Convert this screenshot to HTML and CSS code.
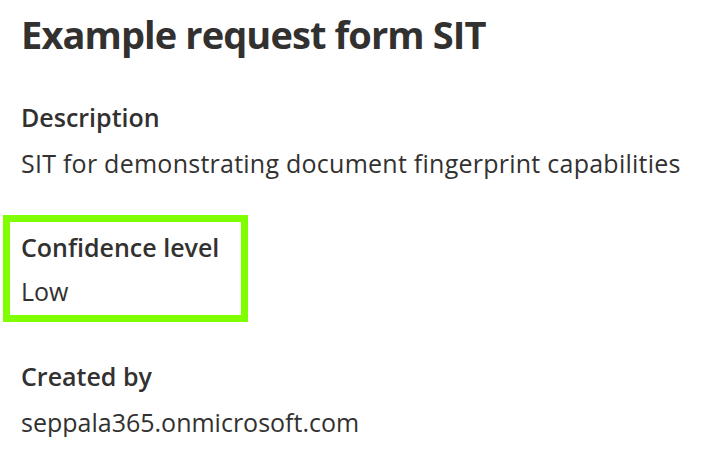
FILE: index.html
```html
<!DOCTYPE html>
<html>
<head>
<meta charset="utf-8">
<link rel="stylesheet" href="styles.css">
</head>
<body>
<main class="page">
  <h1 class="title">Example request form SIT</h1>
  <section class="field">
    <div class="label">Description</div>
    <div class="value value-wide">SIT for demonstrating document fingerprint capabilities</div>
  </section>
  <section class="field highlight">
    <div class="label">Confidence level</div>
    <div class="value">Low</div>
  </section>
  <section class="field">
    <div class="label">Created by</div>
    <div class="value">seppala365.onmicrosoft.com</div>
  </section>
</main>
</body>
</html>
```

FILE: styles.css
```css
html, body {
  margin: 0;
  padding: 0;
  background: #ffffff;
}
body {
  font-family: "Open Sans", "Noto Sans", "Liberation Sans", sans-serif;
  color: #323130;
}
.page {
  display: flex;
  flex-direction: column;
  align-items: flex-start;
  padding: 12px 0 0 21px;
}
.title {
  margin: 0 0 46px 0;
  font-size: 38px;
  font-weight: 700;
  line-height: 44px;
  letter-spacing: -0.9px;
}
.field {
  display: flex;
  flex-direction: column;
  gap: 16px;
  margin-bottom: 39px;
}
.field:last-child {
  margin-bottom: 0;
}
.label {
  font-size: 25px;
  font-weight: 600;
  line-height: 30px;
}
.value {
  font-size: 25px;
  font-weight: 400;
  line-height: 30px;
}
.value-wide {
  letter-spacing: 0.25px;
}
.highlight {
  border: 7px solid #80ff00;
  margin-left: -18px;
  margin-top: -2px;
  padding: 10px 11px 9px 11px;
  width: 245px;
  box-sizing: border-box;
  gap: 14px;
}
```
